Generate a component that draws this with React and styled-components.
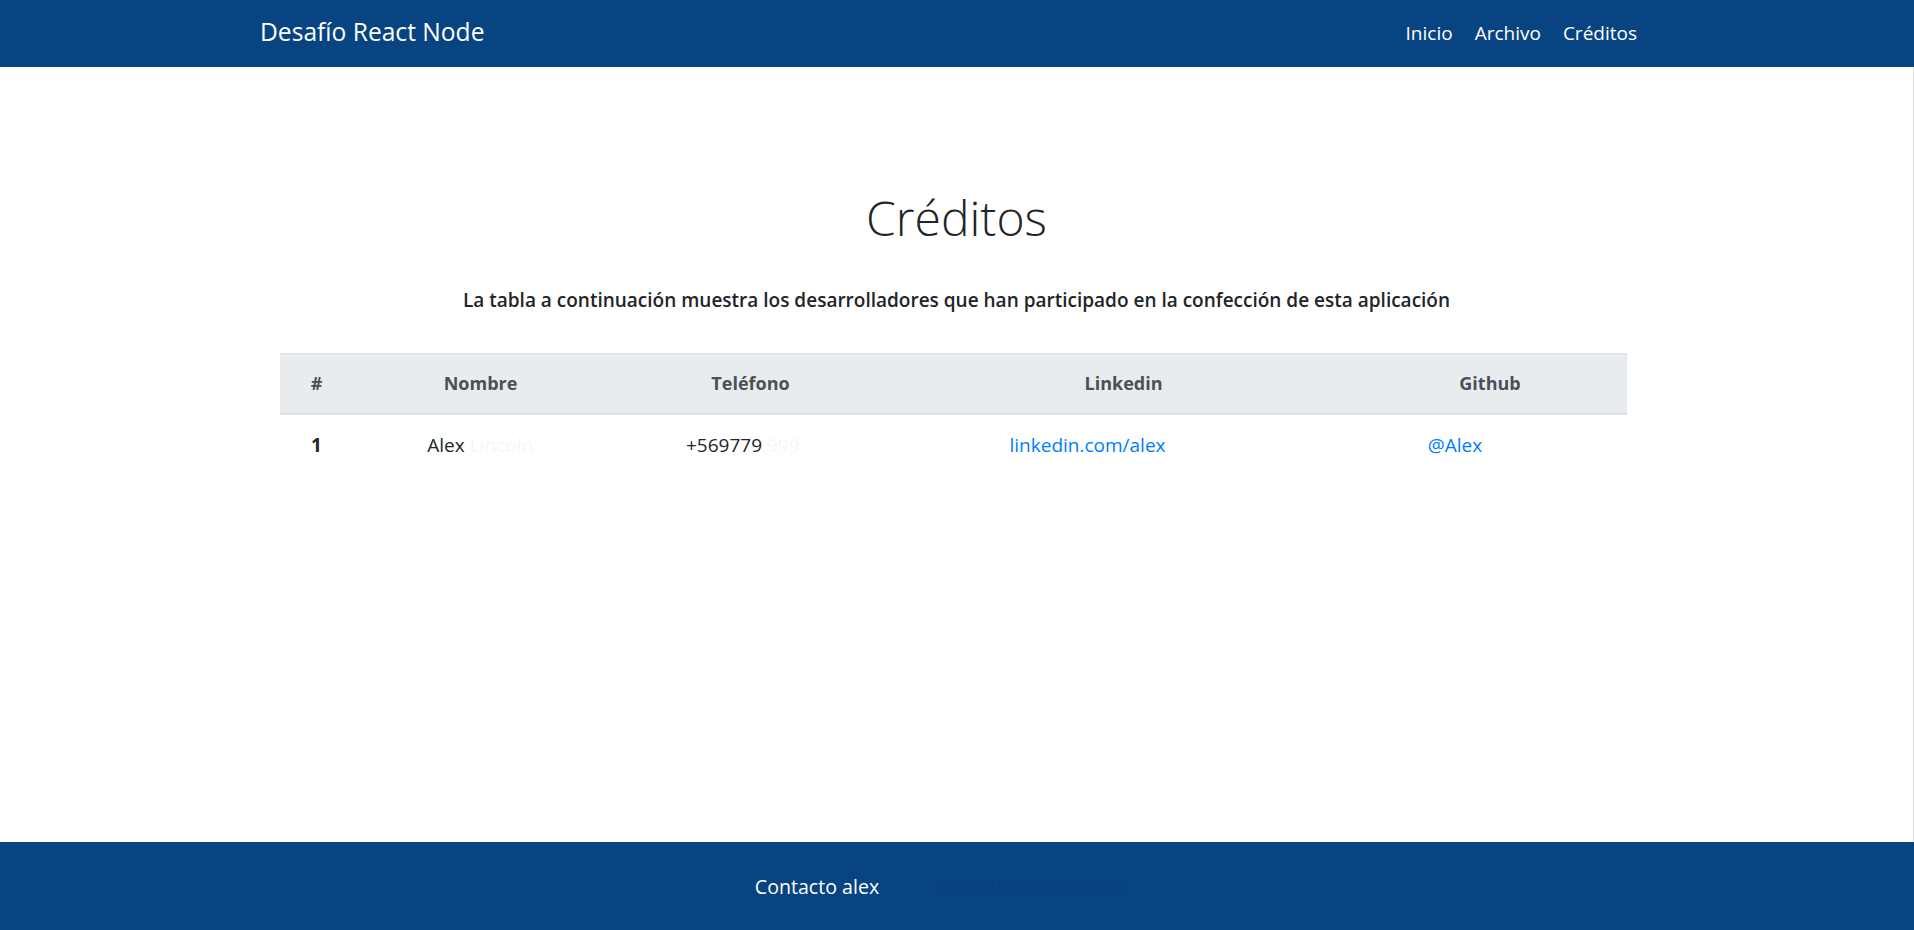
import React from "react";
import styled, { createGlobalStyle } from "styled-components";

const GlobalStyle = createGlobalStyle`
  html, body { margin: 0; padding: 0; }
  body {
    font-family: "Open Sans", "Noto Sans", sans-serif;
    color: #212529;
    background: #ffffff;
    font-size: 19px;
  }
  * { box-sizing: border-box; }
`;

const Page = styled.div`
  min-height: 930px;
  display: flex;
  flex-direction: column;
`;

const Navbar = styled.nav`
  height: 67px;
  background: #084481;
  display: flex;
  align-items: center;
  justify-content: space-between;
  padding: 0 277px 0 260px;
`;

const Brand = styled.a`
  color: #ffffff;
  font-size: 24.6px;
  text-decoration: none;
  line-height: 1;
  margin-top: -2px;
`;

const NavList = styled.ul`
  list-style: none;
  margin: -2px 0 0;
  padding: 0;
  display: flex;
  gap: 22px;
`;

const NavLink = styled.a`
  color: #ffffff;
  font-size: 19px;
  text-decoration: none;
`;

const Main = styled.main`
  flex: 1;
  display: flex;
  flex-direction: column;
  align-items: center;
  padding-top: 122px;
  border-right: 1px solid #dedede;
`;

const Title = styled.h1`
  margin: 0;
  font-size: 48px;
  font-weight: 300;
  line-height: 1.2;
  color: #212529;
`;

const Subtitle = styled.p`
  margin: 40px 0 0;
  font-size: 19px;
  font-weight: 600;
  color: #212529;
`;

const Table = styled.table`
  margin-top: 40px;
  width: 1347px;
  border-collapse: collapse;
  table-layout: fixed;
  margin-right: 7px;
`;

const HeadCell = styled.th`
  background: #e9ecef;
  color: #495057;
  font-weight: 700;
  font-size: 18px;
  text-align: center;
  height: 61px;
  border-top: 1px solid #dee2e6;
  border-bottom: 2px solid #dee2e6;
  padding: 0 14px;
`;

const Cell = styled.td`
  text-align: center;
  height: 60px;
  padding: 0 14px;
  font-size: 19px;
  font-weight: ${(p) => (p.$strong ? 700 : 400)};
  color: #212529;
  white-space: nowrap;
`;

const Link = styled.a`
  color: #007bff;
  text-decoration: none;
`;

const Ghost = styled.span`
  display: inline-block;
  width: ${(p) => p.$w}px;
  overflow: hidden;
  vertical-align: bottom;
  color: ${(p) => p.$color || "#f6f6f6"};
  text-align: left;
`;

const Footer = styled.footer`
  height: 88px;
  background: #084481;
  display: flex;
  align-items: center;
  justify-content: center;
  gap: 58px;
  padding-right: 36px;
`;

const FooterText = styled.span`
  color: #ffffff;
  font-size: 19.6px;
`;

const FooterFaint = styled.span`
  color: #0b4078;
  font-size: 19px;
`;

const columns = [74, 254, 286, 460, 273];

export default function App() {
  return (
    <>
      <GlobalStyle />
      <Page>
        <Navbar>
          <Brand href="#">Desafío React Node</Brand>
          <NavList>
            <li><NavLink href="#">Inicio</NavLink></li>
            <li><NavLink href="#">Archivo</NavLink></li>
            <li><NavLink href="#">Créditos</NavLink></li>
          </NavList>
        </Navbar>
        <Main>
          <Title>Créditos</Title>
          <Subtitle>
            La tabla a continuación muestra los desarrolladores que han participado en la confección de esta aplicación
          </Subtitle>
          <Table>
            <colgroup>
              {columns.map((w, i) => (
                <col key={i} style={{ width: w }} />
              ))}
            </colgroup>
            <thead>
              <tr>
                <HeadCell>#</HeadCell>
                <HeadCell>Nombre</HeadCell>
                <HeadCell>Teléfono</HeadCell>
                <HeadCell>Linkedin</HeadCell>
                <HeadCell>Github</HeadCell>
              </tr>
            </thead>
            <tbody>
              <tr>
                <Cell $strong>1</Cell>
                <Cell>
                  Alex <Ghost $w={64}>Lincoln</Ghost>
                </Cell>
                <Cell>
                  +569779 <Ghost $w={48}>999</Ghost>
                </Cell>
                <Cell>
                  <Link href="#">linkedin.com/alex</Link>
                  <Ghost $w={72} $color="#fdfdfd"> </Ghost>
                </Cell>
                <Cell>
                  <Link href="#">@Alex</Link>
                  <Ghost $w={70} $color="#fdfdfd"> </Ghost>
                </Cell>
              </tr>
            </tbody>
          </Table>
        </Main>
        <Footer>
          <FooterText>Contacto alex</FooterText>
          <FooterFaint>alex@desarrollo.com</FooterFaint>
        </Footer>
      </Page>
    </>
  );
}
